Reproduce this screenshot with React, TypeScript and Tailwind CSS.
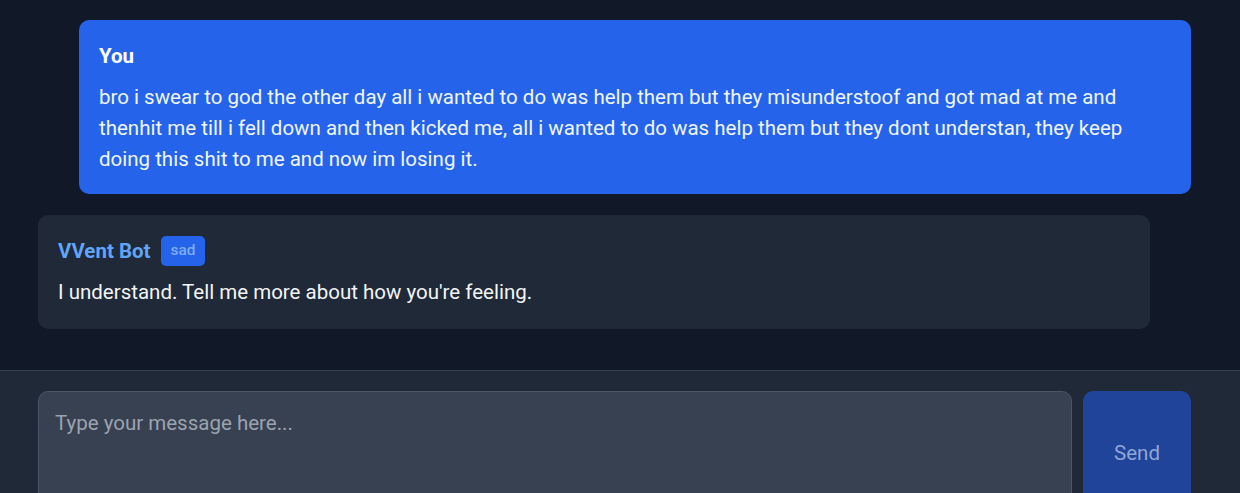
export default function App() {
  return (
    <div
      className="h-[493px] overflow-hidden bg-[#111827] flex flex-col"
      style={{ fontFamily: "Roboto, 'Noto Sans', sans-serif" }}
    >
      <div className="shrink-0 flex flex-col gap-[21px] pt-5 pl-[38px] pr-[49px] h-[370px]">
        <div className="ml-auto w-[1112px] bg-[#2563eb] rounded-[10px] px-5 pt-[21px] pb-[19px] text-white">
          <div className="font-bold text-[20.5px] leading-[31px]">You</div>
          <p className="mt-[10px] text-[20.5px] leading-[31px] text-[#eff6ff]">
            bro i swear to god the other day all i wanted to do was help them but they misunderstoof and got mad at me and
            thenhit me till i fell down and then kicked me, all i wanted to do was help them but they dont understan, they keep
            doing this shit to me and now im losing it.
          </p>
        </div>
        <div className="w-[1112px] bg-[#1f2937] rounded-[10px] px-5 pt-[21px] pb-[21px]">
          <div className="flex items-center gap-[10px] h-[30px]">
            <span className="font-bold text-[20.5px] text-[#60a5fa]">VVent Bot</span>
            <span className="h-[30px] px-[10px] flex items-center rounded-[5px] bg-[#2563eb] text-[15.4px] font-medium text-[#7fabf5]">
              sad
            </span>
          </div>
          <p className="mt-[11px] text-[20.5px] leading-[31px] text-[#f3f4f6]">
            I understand. Tell me more about how you're feeling.
          </p>
        </div>
      </div>
      <div className="flex-1 bg-[#1f2937] border-t border-[#374151] pt-[20px] pl-[38px] pr-[49px] flex gap-[11px]">
        <textarea
          placeholder="Type your message here..."
          className="flex-1 h-[124px] resize-none rounded-[10px] bg-[#374151] border border-[#4b5563] px-4 py-[19px] text-[20.5px] leading-[25px] text-[#f3f4f6] placeholder:text-[#9ca3af] outline-none"
        />
        <button
          disabled
          className="w-[108px] h-[124px] rounded-[10px] bg-[#1f449a] text-[#8fa6d6] text-[20.5px]"
        >
          Send
        </button>
      </div>
    </div>
  );
}
